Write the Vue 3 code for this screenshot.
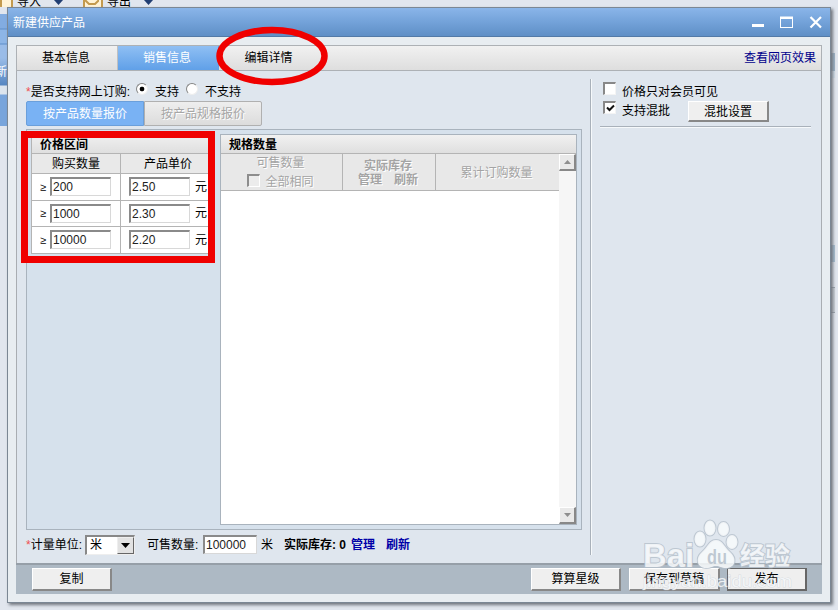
<template>
  <div class="desktop">
    <!-- Toolbar and side strip of the window underneath -->
    <div class="back-toolbar">
      <i class="back-icon"></i>
      <span class="back-label">导入</span>
      <i class="back-drop"></i>
      <i class="back-icon second"><svg width="14" height="7"><path d="M0 0 L4 4 H10 L14 0" fill="none" stroke="#c39a4e" stroke-width="2" /></svg></i>
      <span class="back-label">导出</span>
      <i class="back-drop"></i>
    </div>
    <div class="back-side"><span>新</span></div>
    <i class="back-edge edge-top"></i>
    <i class="back-edge edge-mid"></i>
    <i class="back-edge edge-low"></i>

    <div class="window">
      <header class="titlebar">
        <span class="title">新建供应产品</span>
        <svg class="controls" width="72" height="16" viewBox="0 0 72 16">
          <rect x="1" y="10" width="12" height="3" fill="#fff" />
          <rect x="29.5" y="3.5" width="12" height="10" fill="none" stroke="#fff" />
          <rect x="29" y="2.5" width="13" height="2.5" fill="#fff" />
          <path d="M59.5 3 L70 13.5 M70 3 L59.5 13.5" fill="none" stroke="#fff" stroke-width="2.2" />
        </svg>
      </header>

      <div class="frame">
        <nav class="tabs">
          <span
            v-for="tab in tabs"
            :key="tab"
            class="tab"
            :class="{ active: tab === activeTab }"
            @click="activeTab = tab"
          >{{ tab }}</span>
          <a class="preview-link">查看网页效果</a>
        </nav>

        <div class="content">
          <section class="left">
            <div class="order-row">
              <span><b class="star">*</b>是否支持网上订购:</span>
              <i class="radio checked"></i><span class="yes">支持</span>
              <i class="radio"></i><span class="no">不支持</span>
            </div>
            <div class="modes">
              <span class="mode active">按产品数量报价</span>
              <span class="mode">按产品规格报价</span>
            </div>

            <div class="panel">
              <div class="prices">
                <div class="box-title">价格区间</div>
                <div class="price-row head"><span>购买数量</span><span>产品单价</span></div>
                <div v-for="row in rows" :key="row.qty" class="price-row">
                  <span class="cell"><em>≥</em><i class="field">{{ row.qty }}</i></span>
                  <span class="cell price"><i class="field">{{ row.price }}</i><u>元</u></span>
                </div>
              </div>
              <div class="specs">
                <div class="box-title">规格数量</div>
                <div class="spec-area">
                  <div class="spec-main">
                    <div class="spec-head">
                      <div class="spec-cell available">
                        <span>可售数量</span>
                        <span class="same"><i class="check off"></i>全部相同</span>
                      </div>
                      <div class="spec-cell stock"><b>实际库存</b><b class="ops"><span>管理</span><span>刷新</span></b></div>
                      <div class="spec-cell total">累计订购数量</div>
                    </div>
                  </div>
                  <div class="scrollbar">
                    <i class="scroll-btn"><svg width="7" height="4"><path d="M0 4 L3.5 0 L7 4Z" fill="#8e8e8e" /></svg></i>
                    <i class="scroll-btn"><svg width="7" height="4"><path d="M0 0 L7 0 L3.5 4Z" fill="#8e8e8e" /></svg></i>
                  </div>
                </div>
              </div>
            </div>

            <div class="unit-row">
              <span class="unit-label"><b class="star">*</b>计量单位:</span>
              <span class="select">米<i><svg width="9" height="5"><path d="M0 0H9L4.5 5Z" /></svg></i></span>
              <span class="qty-label">可售数量:</span>
              <span class="field qty">100000</span>
              <span class="mi">米</span>
              <b class="stock-label">实际库存: 0</b>
              <b class="link">管理</b>
              <b class="link refresh">刷新</b>
            </div>
          </section>

          <aside class="right">
            <div class="option"><i class="check"></i>价格只对会员可见</div>
            <div class="option mix">
              <i class="check"><svg width="9" height="9" viewBox="0 0 9 9"><path d="M1 3.5 L3.5 6 L8 1.5" fill="none" stroke="#111" stroke-width="2" /></svg></i>
              支持混批
              <button class="btn mix-btn">混批设置</button>
            </div>
            <div class="rule"></div>
          </aside>
        </div>

        <footer class="footer">
          <button class="btn copy">复制</button>
          <button class="btn stars">算算星级</button>
          <button class="btn draft">保存到草稿</button>
          <button class="btn publish">发布</button>
        </footer>
      </div>
    </div>

    <!-- Red marks and watermark lie over the whole window -->
    <svg class="overlay" width="838" height="610" viewBox="0 0 838 610">
      <rect x="24.5" y="134.5" width="187" height="125" fill="none" stroke="#f00000" stroke-width="7" />
      <ellipse cx="272" cy="56" rx="52.5" ry="26" fill="none" stroke="#f00000" stroke-width="6.5" />
      <g class="mark" fill="#f8fafc" fill-opacity=".85" stroke="#b4bfca" stroke-opacity=".8" stroke-width="2" paint-order="stroke">
        <text x="643" y="567" font-size="34" font-weight="700" textLength="51" lengthAdjust="spacingAndGlyphs">Bai</text>
        <ellipse cx="700" cy="539" rx="5.5" ry="7.5" />
        <ellipse cx="710" cy="528" rx="5.5" ry="7.5" />
        <ellipse cx="723.5" cy="529" rx="5.5" ry="7" />
        <ellipse cx="732" cy="542" rx="5.5" ry="7" />
        <path d="M716 540 C709 540 708 547 702 552 C695 558 697 568 706 568 C712 568 712 566 716 566 C720 566 721 568 726 568 C736 568 737 558 730 552 C724 547 723 540 716 540Z" />
        <text x="707" y="564" font-size="21" font-weight="700" fill="#b5c0cb" stroke="none" textLength="20" lengthAdjust="spacingAndGlyphs">du</text>
        <text x="740" y="565" font-size="25" font-weight="700">经验</text>
        <text x="643" y="587" font-size="17" stroke-width="1" stroke-opacity=".4" textLength="149" lengthAdjust="spacingAndGlyphs">jingyan.baidu.com</text>
      </g>
    </svg>
  </div>
</template>

<script setup>
import { ref } from 'vue'

const tabs = ['基本信息', '销售信息', '编辑详情']
const activeTab = ref('销售信息')

const rows = [
  { qty: '200',   price: '2.50' },
  { qty: '1000',  price: '2.30' },
  { qty: '10000', price: '2.20' },
]
</script>

<style>
body {
  margin: 0;
  overflow: hidden;
}
</style>

<style scoped>
* { box-sizing: border-box; }
i, em { font-style: normal; }
u { text-decoration: none; }

.desktop {
  position: relative;
  width: 838px;
  height: 610px;
  overflow: hidden;
  background: #e1e6ee;
  font: 12px/16px "Liberation Sans", "Noto Sans CJK SC", sans-serif;
  color: #000;
  white-space: nowrap;
}

/* Window underneath */
.back-toolbar {
  display: flex;
  height: 7px;
  overflow: hidden;
  align-items: flex-start;
}
.back-icon {
  width: 13px;
  height: 10px;
  border: 2px solid #c39a4e;
  border-top: 0;
  background: #fff3d6;
}
.back-icon.second { width: 20px; margin-left: 20px; }
.back-icon svg { display: block; }
.back-label { margin: -6px 0 0 4px; width: 36px; }
.back-drop {
  width: 9px;
  height: 5px;
  background: #213e72;
  clip-path: polygon(0 0, 100% 0, 50% 100%);
  margin-left: 1px;
}
.back-side {
  width: 7px;
  height: 112px;
  margin-top: 7px;
  padding-top: 50px;
  overflow: hidden;
  color: #fff;
  background: linear-gradient(#82ace1 0 14px, #5d8ec9 15px, #8db5e6 16px 29px, #5d8ec9 30px, #9abce8 31px 44px, #5687c2 71px, #dce5ee 72px 80px, #78a5dc 81px);
}
.back-side span { margin-left: -5px; }
.back-edge { position: absolute; left: 831px; width: 4px; }
.edge-top { top: 53px; height: 25px; background: linear-gradient(#9db4c8 70%, #d3e0ec 72%); }
.edge-mid { top: 245px; height: 17px; background: #a6bed2; }
.edge-low { top: 287px; height: 26px; background: #ccd2d9; border: solid #9ba3ad; border-width: 1px 0; }

/* Dialog */
.window {
  position: absolute;
  left: 7px;
  top: 7px;
  width: 824px;
  height: 596px;
  border: 1px solid #7b8794;
  background: #e8edf1;
  box-shadow: 2px 2px 3px #70757d;
}
.titlebar {
  display: flex;
  align-items: center;
  justify-content: space-between;
  height: 29px;
  padding: 0 7px 0 5px;
  background: linear-gradient(#8ab5e9, #73a2d9 50%, #5f8fc6);
  border-bottom: 1px solid #537aa7;
}
.title { color: #fff; padding-top: 2px; }
.frame {
  display: flex;
  flex-direction: column;
  margin: 8px;
  height: 549px;
}
.tabs {
  display: flex;
  flex: none;
  height: 26px;
  border: 1px solid #adb1b5;
  background: linear-gradient(#f1f1f1, #dedede);
}
.tab {
  width: 101px;
  padding-right: 2px;
  line-height: 24px;
  text-align: center;
  border-right: 1px solid #c0c0c0;
}
.tab:nth-child(3) { border: 0; }
.tab.active {
  color: #fff;
  background: linear-gradient(#8fbff4, #60a0e8);
  border-color: #60a0e8;
}
.preview-link { margin-left: auto; margin-right: 5px; line-height: 24px; color: #00008b; }

.content {
  display: flex;
  flex: 1;
  background: #dfe6ee;
  border: solid #a9adb2;
  border-width: 0 1px;
}
.left { width: 573px; padding: 10px 0 0 9px; }
.star { color: #f05050; font-weight: 400; }
.order-row { display: flex; height: 20px; line-height: 23px; }
.radio {
  width: 12px;
  height: 12px;
  margin: 2px 7px 0 6px;
  border: 1px solid #858585;
  border-right-color: #eee;
  border-bottom-color: #eee;
  border-radius: 50%;
  background: #fff;
}
.radio.checked { background: radial-gradient(#000 0 2px, #fff 2.7px); }
.yes { width: 25px; }
.modes { display: flex; height: 25px; }
.mode {
  width: 118px;
  line-height: 24px;
  text-align: center;
  color: #a6a6a6;
  text-shadow: 1px 1px #fff;
  border: 1px solid #b0b0b0;
  border-radius: 0 2px 2px 0;
  background: linear-gradient(#eee, #dcdcdc);
}
.mode.active {
  color: #fff;
  text-shadow: none;
  border-color: #6a9fdb;
  border-radius: 2px 0 0 2px;
  background: #79b2f4;
}
.panel {
  display: flex;
  width: 556px;
  height: 401px;
  margin-top: 3px;
  padding: 4px;
  border: 1px solid #a9b3bd;
  background: #d6e1ec;
}
.box-title {
  height: 20px;
  padding-left: 8px;
  line-height: 20px;
  font-weight: 700;
  background: linear-gradient(#f1f1f1, #dfdfdf);
  border-bottom: 1px solid #b4b4b4;
}
.prices {
  width: 184px;
  height: 120px;
  margin-right: 5px;
  border-left: 1px solid #b4b4b4;
  background: #fff;
}
.prices .box-title { line-height: 22px; }
.price-row {
  display: grid;
  grid-template-columns: 89px 1fr;
  height: 26.6px;
  border-bottom: 1px solid #b4b4b4;
}
.price-row.head {
  height: 20px;
  line-height: 21px;
  text-align: center;
  background: #e9e9e9;
}
.price-row > span:first-child { border-right: 1px solid #b4b4b4; }
.cell { display: flex; align-items: center; padding-left: 8px; }
.cell em { width: 10px; font-size: 11px; }
.cell u { margin-left: 5px; }
.field {
  width: 61px;
  height: 19px;
  padding-left: 1px;
  line-height: 16px;
  color: #222;
  background: #fff;
  border: 2px solid #8a8a8a;
  border-right: 1px solid #d8d8d8;
  border-bottom: 1px solid #d8d8d8;
}
.specs {
  display: flex;
  flex-direction: column;
  width: 357px;
  height: 391px;
  border: 1px solid #a9b3bd;
  background: #fff;
}
.specs .box-title { height: 19px; flex: none; }
.spec-area { display: flex; flex: 1; }
.spec-main { flex: 1; }
.spec-head {
  display: flex;
  height: 37px;
  color: #a4a4a4;
  text-shadow: 1px 1px #fff;
  background: #e8e8e8;
  border-bottom: 1px solid #b4b4b4;
}
.spec-cell {
  display: flex;
  flex-direction: column;
  align-items: center;
  justify-content: center;
  padding: 1px 2px 0 0;
}
.available { width: 122px; line-height: 19px; border-right: 1px solid #b4b4b4; }
.same { display: flex; gap: 5px; }
.same .check { margin-top: 1px; }
.stock { width: 93px; line-height: 14px; border-right: 1px solid #b4b4b4; }
.ops { display: flex; gap: 12px; }
.total { flex: 1; }
.check {
  display: flex;
  width: 13px;
  height: 13px;
  padding: 1px 0 0 1px;
  border: 2px solid #888;
  border-right: 1px solid #f4f4f4;
  border-bottom: 1px solid #f4f4f4;
  background: #fff;
}
.check.off { background: #ececec; border-color: #8d8d8d #fff #fff #8d8d8d; }
.scrollbar {
  display: flex;
  flex-direction: column;
  justify-content: space-between;
  width: 17px;
  background: #f6f6f6;
}
.scroll-btn {
  display: flex;
  align-items: center;
  justify-content: center;
  height: 17px;
  border: 1px solid #fff;
  border-right: 2px solid #888;
  border-bottom: 2px solid #888;
  background: #e9e9e9;
}
.unit-row { display: flex; align-items: center; height: 19px; margin-top: 5px; }
.unit-label { width: 59px; }
.select {
  display: flex;
  justify-content: space-between;
  width: 50px;
  height: 20px;
  padding-left: 3px;
  line-height: 17px;
  background: #fff;
  border: 2px solid #888;
  border-right: 1px solid #eee;
  border-bottom: 1px solid #eee;
}
.select i {
  display: flex;
  align-items: center;
  justify-content: center;
  width: 17px;
  border: 1px solid #eee;
  border-right: 1px solid #666;
  border-bottom: 1px solid #666;
  background: #e2e2e2;
}
.qty-label { width: 56px; margin-left: 12px; }
.field.qty { width: 54px; }
.mi { margin-left: 4px; }
.stock-label { margin-left: 11px; width: 67px; }
.link { color: #0000a8; }
.refresh { margin-left: 11px; }

.right {
  flex: 1;
  margin: 8px 0;
  padding: 3px 10px 0 9px;
  border-left: 1px solid #a9b1ba;
  box-shadow: inset 1px 0 #f6f9fb;
}
.option { display: flex; padding-left: 3px; height: 19px; line-height: 20px; }
.option .check { margin-right: 6px; }
.mix-btn { margin-left: 18px; width: 81px; height: 21px; line-height: 19px; }
.rule { height: 2px; margin-top: 6px; border-top: 1px solid #a9b1ba; border-bottom: 1px solid #f6f9fb; }

.btn {
  flex: none;
  padding: 0;
  font: inherit;
  color: #000;
  background: #efefef;
  border: 1px solid #fff;
  border-right: 2px solid #888;
  border-bottom: 2px solid #888;
}
.footer {
  display: flex;
  flex: none;
  height: 31px;
  padding: 3px 15px 0 16px;
  background: #adb9c4;
  border-top: 2px solid #969fa8;
}
.footer .btn { height: 23px; }
.copy { width: 80px; }
.stars { width: 90px; margin-left: auto; }
.draft { width: 91px; margin-left: 8px; }
.publish { width: 80px; margin-left: 7px; border: 1px solid #666; border-right-width: 2px; border-bottom-width: 2px; }

.overlay { position: absolute; left: 0; top: 0; pointer-events: none; }
.mark { font-family: "Liberation Sans", "Noto Sans CJK SC", sans-serif; }
</style>
